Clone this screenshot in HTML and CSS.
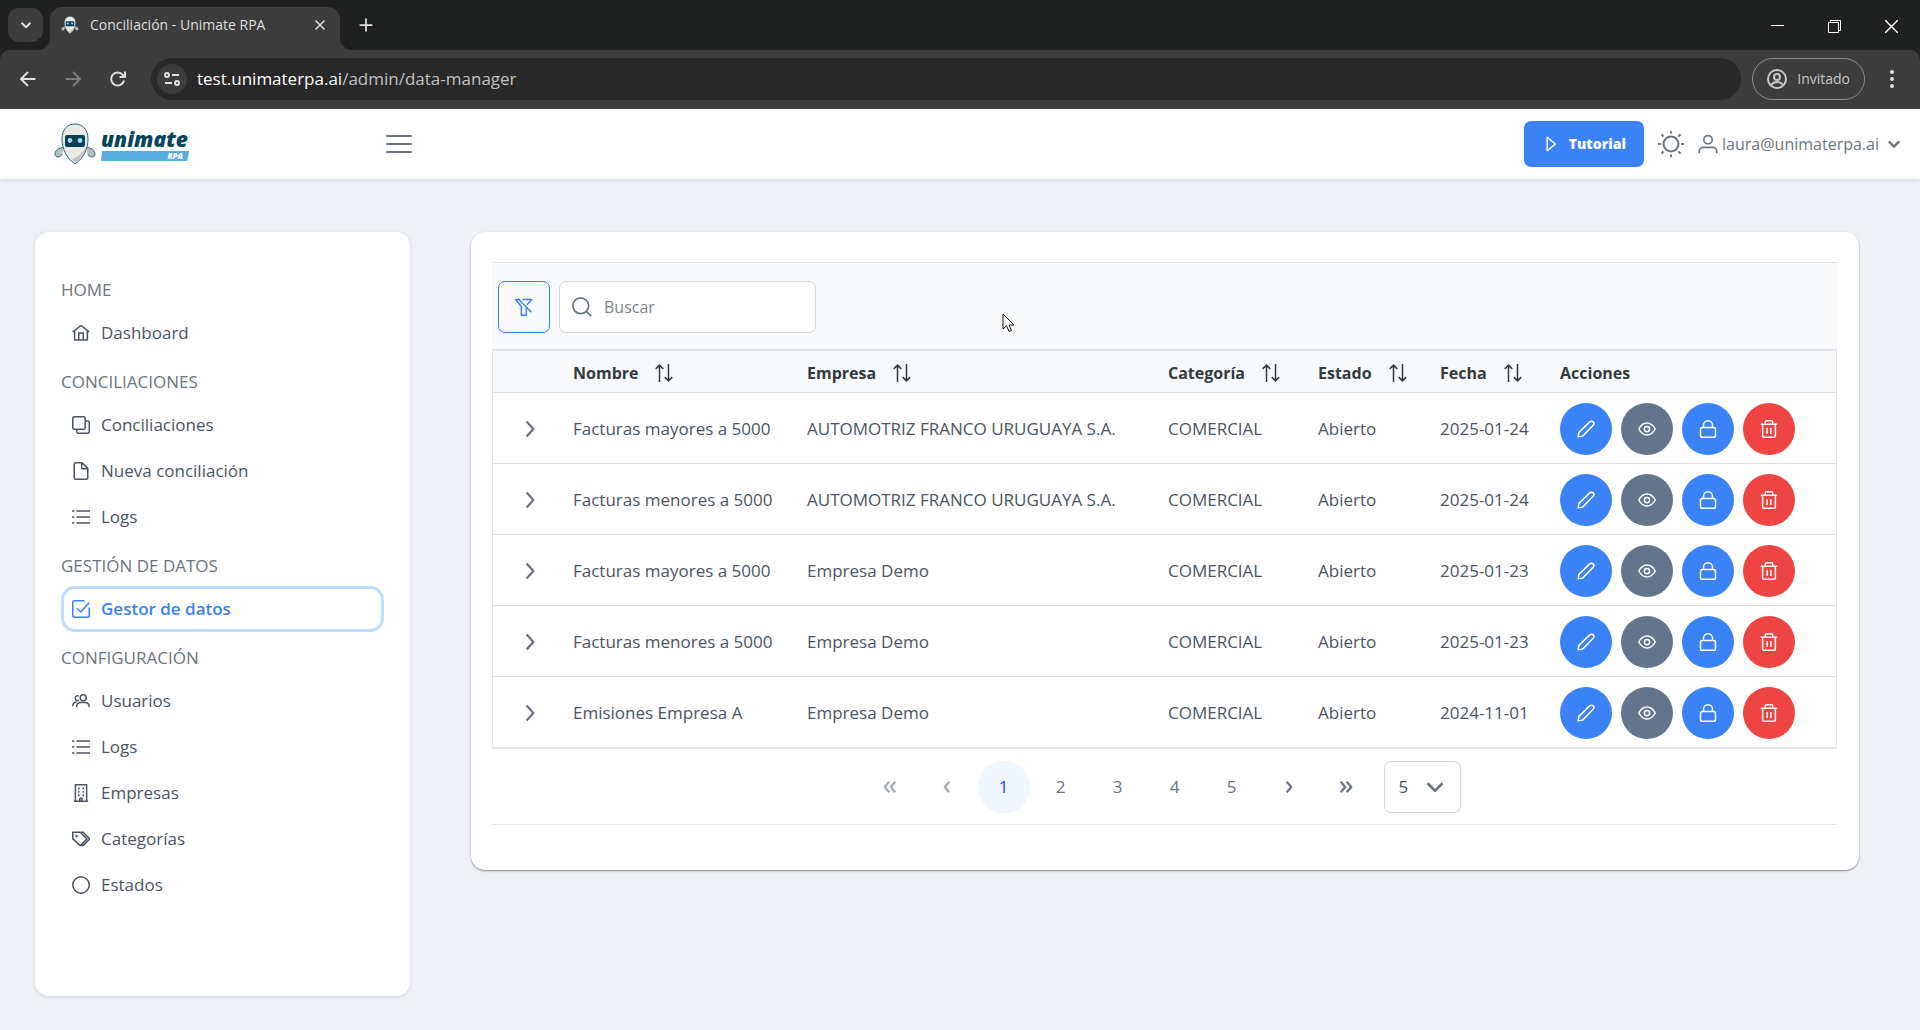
FILE: index.html
```html
<!DOCTYPE html>
<html lang="es">
<head>
<meta charset="utf-8">
<meta name="viewport" content="width=device-width, initial-scale=1">
<title>Conciliación - Unimate RPA</title>
<link rel="stylesheet" href="styles.css">
</head>
<body>
<svg class="sprite" aria-hidden="true">
  <symbol id="chev-down" viewBox="0 0 24 24"><path d="M3 7.500l9 9 9-9"/></symbol>
  <symbol id="chev-right" viewBox="0 0 24 24"><path d="M7.500 2l9 10-9 10"/></symbol>
  <symbol id="angle-left" viewBox="0 0 24 24"><path d="M15 5l-6 7 6 7"/></symbol>
  <symbol id="angle-right" viewBox="0 0 24 24"><path d="M9 5l6 7-6 7"/></symbol>
  <symbol id="angles-left" viewBox="0 0 24 24"><path d="M11 5l-6 7 6 7M19 5l-6 7 6 7"/></symbol>
  <symbol id="angles-right" viewBox="0 0 24 24"><path d="M5 5l6 7-6 7M13 5l6 7-6 7"/></symbol>
  <symbol id="home" viewBox="0 0 24 24"><path d="M1 10.500L12 2l11 8.500M3.500 9v12.300h17V9M9 21v-9h6v9"/></symbol>
  <symbol id="clone" viewBox="0 0 24 24"><rect x="1" y="1" width="16.500" height="16.500" rx="2"/><path d="M17.500 6.500H21a2 2 0 0 1 2 2V21a2 2 0 0 1-2 2H8.500a2 2 0 0 1-2-2v-3.500"/></symbol>
  <symbol id="file" viewBox="0 0 24 24"><path d="M13.500 1H5a2 2 0 0 0-2 2v18a2 2 0 0 0 2 2h14a2 2 0 0 0 2-2V8.500zM13 1.500V9h7.500"/></symbol>
  <symbol id="list" viewBox="0 0 24 24"><path d="M6 4h18M6 12h18M6 20h18M0 4h3M0 12h3M0 20h3"/></symbol>
  <symbol id="check-square" viewBox="0 0 24 24"><path d="M17 1H3a2 2 0 0 0-2 2v18a2 2 0 0 0 2 2h18a2 2 0 0 0 2-2V10M6.500 11l5 5L23 3.500"/></symbol>
  <symbol id="users" viewBox="0 0 24 24"><circle cx="15" cy="7.500" r="4"/><path d="M6 20c0-4 3-6 6-6h5c3.500 0 6 2 6 6M9 5.500a3.200 3.200 0 1 0 0 5.500M1 19c0-3.500 2-5.500 5-5.500"/></symbol>
  <symbol id="building" viewBox="0 0 24 24"><path d="M4.500 23V1h15v22M2.500 23h19M10.500 23v-4h3v4"/><path d="M8 6h2M14 6h2M8 10.500h2M14 10.500h2M8 15h2M14 15h2" stroke-width="2.500"/></symbol>
  <symbol id="tags" viewBox="0 0 24 24"><path d="M1 3h10l9 9-8.500 8.500h-1L1 11.500zM12 3h3l8.500 9-8.500 8.500h-4"/><circle cx="6" cy="8" r=".7"/></symbol>
  <symbol id="circle" viewBox="0 0 24 24"><circle cx="12" cy="12" r="11"/></symbol>
  <symbol id="pencil" viewBox="0 0 24 24"><path d="M1.500 22.500l1-6L17 2.500a3 3 0 0 1 4.500 4.500L7.500 21.500z"/></symbol>
  <symbol id="eye" viewBox="0 0 24 24"><path d="M1 12c6-10.500 16-10.500 22 0-6 10.500-16 10.500-22 0z"/><circle cx="12" cy="12" r="3.500"/></symbol>
  <symbol id="lock" viewBox="0 0 24 24"><rect x="2" y="10" width="20" height="13" rx="2.500"/><path d="M6 10V7a6 6 0 0 1 12 0v3"/></symbol>
  <symbol id="trash" viewBox="0 0 24 24"><path d="M1 5.500h22M3.500 5.500V21a2 2 0 0 0 2 2h13a2 2 0 0 0 2-2V5.500M7 5.500V3a2 2 0 0 1 2-2h6a2 2 0 0 1 2 2v2.500M9.500 10.500v8M14.500 10.500v8"/></symbol>
  <symbol id="sort" viewBox="0 0 24 24"><path d="M6 24V1.500M1 6.500l5-5 5 5M18 0v22.500M13 17.500l5 5 5-5"/></symbol>
  <symbol id="filter-slash" viewBox="0 0 24 24"><path d="M5 2l17 17M7 2H1l7.500 9.500V23h6.500V13M16 9l6.500-7H10"/></symbol>
  <symbol id="search" viewBox="0 0 24 24"><circle cx="10.500" cy="10.500" r="9.500"/><path d="M17.500 17.500L23 23"/></symbol>
  <symbol id="sun" viewBox="0 0 28 28"><circle cx="14" cy="14" r="7.500"/><path d="M14 1v2.500M14 24.500V27M1 14h3M24 14h3M4.500 4.500l2 2M21.500 21.500l2 2M4.500 23.500l2-2M21.500 6.500l2-2"/></symbol>
  <symbol id="user" viewBox="0 0 24 24"><circle cx="12" cy="7" r="5"/><path d="M1.500 23v-2a5 5 0 0 1 5-5h11a5 5 0 0 1 5 5v2"/></symbol>
  <symbol id="play" viewBox="0 0 24 24"><path d="M7 3v18l11-9z"/></symbol>
  <symbol id="robot" viewBox="0 0 42 42">
    <path d="M10 24C5 25 1 27 1 31c0 4 6 4 7 0M32 24c5 1 9 3 9 7 0 4-6 4-7 0" fill="#b9bfc0" stroke="#2f6477"/>
    <path d="M21 1C13 1 8 7 8 16c0 9 4 19 13 25 9-6 13-16 13-25C34 7 29 1 21 1z" fill="#e8eae6" stroke="#2f6477"/>
    <path d="M33 22c-2 8-6 14-12 18l-3-4c7-2 12-8 15-14z" fill="#c0c4c4" stroke="none"/>
    <rect x="11" y="12" width="20" height="12" rx="2" fill="#0b3f54" stroke="none"/>
    <circle cx="16" cy="17.500" r="2.400" fill="#a9d0ff" stroke="none"/><circle cx="26" cy="17.500" r="2.400" fill="#a9d0ff" stroke="none"/>
  </symbol>
</svg>

<div class="browser">
  <div class="tabstrip">
    <button class="tab-search" aria-label="Buscar pestañas"><svg class="icon s12 w4"><use href="#chev-down"/></svg></button>
    <div class="tab">
      <svg class="favicon"><use href="#robot"/></svg>
      <span class="tab-title">Conciliación - Unimate RPA</span>
      <button class="plain" aria-label="Cerrar pestaña"><svg class="icon s12 w3" viewBox="0 0 24 24"><path d="M3 3l18 18M21 3L3 21"/></svg></button>
    </div>
    <button class="plain new-tab" aria-label="Nueva pestaña"><svg class="icon s14 w3" viewBox="0 0 24 24"><path d="M12 1v22M1 12h22"/></svg></button>
    <div class="window-buttons">
      <button class="plain" aria-label="Minimizar"><svg class="icon s13" viewBox="0 0 13 13"><path d="M0 5.500h13"/></svg></button>
      <button class="plain" aria-label="Restaurar"><svg class="icon s13" viewBox="0 0 13 13"><path d="M.5 2.500h10v10H.5zM2.500 2.500v-2h10v10h-2"/></svg></button>
      <button class="plain" aria-label="Cerrar"><svg class="icon s13" viewBox="0 0 13 13"><path d="M0 0l13 13M13 0L0 13" stroke-width="1.400"/></svg></button>
    </div>
  </div>
  <div class="toolbar">
    <button class="plain" aria-label="Atrás"><svg class="icon s16 w2" viewBox="0 0 16 16"><path d="M15.500 8H1.500M8 1L1 8l7 7"/></svg></button>
    <button class="plain" aria-label="Adelante" disabled><svg class="icon s16 w2" viewBox="0 0 16 16"><path d="M.5 8h14M8 1l7 7-7 7"/></svg></button>
    <button class="plain" aria-label="Recargar"><svg class="icon s16 w2" viewBox="0 0 16 16"><path d="M14 9.500A6.500 6.500 0 1 1 12.800 4L15 6M15 .5V6H9.500"/></svg></button>
    <div class="omnibox">
      <button class="site-info" aria-label="Información del sitio"><svg class="icon s16 w2" viewBox="0 0 16 16"><circle cx="3" cy="4" r="2"/><path d="M8 4h7M1 12h7"/><circle cx="13" cy="12" r="2"/></svg></button>
      <span class="url">test.unimaterpa.ai<span class="url-path">/admin/data-manager</span></span>
    </div>
    <button class="guest"><svg class="icon s20 w2" viewBox="0 0 20 20"><circle cx="10" cy="10" r="9"/><circle cx="10" cy="8" r="3"/><path d="M4 16c3-4 9-4 12 0"/></svg>Invitado</button>
    <button class="plain menu-dots" aria-label="Menú"><svg class="icon s18" viewBox="0 0 18 18"><g fill="currentColor" stroke="none"><circle cx="9" cy="2" r="2"/><circle cx="9" cy="9" r="2"/><circle cx="9" cy="16" r="2"/></g></svg></button>
  </div>
</div>

<header class="topbar">
  <a class="logo" href="#">
    <svg class="logo-robot"><use href="#robot"/></svg>
    <span class="logo-words"><span class="logo-name">unimate</span><span class="logo-band">RPA</span></span>
  </a>
  <button class="plain burger" aria-label="Menú lateral"><svg viewBox="0 0 26 20"><path d="M1 2h24M1 10h24M1 18h24"/></svg></button>
  <div class="top-actions">
    <button class="tutorial"><svg class="icon s18 w2"><use href="#play"/></svg>Tutorial</button>
    <button class="plain" aria-label="Tema"><svg class="icon s28 w2"><use href="#sun"/></svg></button>
    <button class="plain account"><svg class="icon s20 w2"><use href="#user"/></svg><span>laura@unimaterpa.ai</span><svg class="icon s14 w4"><use href="#chev-down"/></svg></button>
  </div>
</header>

<div class="layout">
  <nav class="sidebar">
    <h2>HOME</h2>
    <a href="#"><svg class="icon s18 w2"><use href="#home"/></svg>Dashboard</a>
    <h2>CONCILIACIONES</h2>
    <a href="#"><svg class="icon s18 w2"><use href="#clone"/></svg>Conciliaciones</a>
    <a href="#"><svg class="icon s18 w2"><use href="#file"/></svg>Nueva conciliación</a>
    <a href="#"><svg class="icon s18 w2"><use href="#list"/></svg>Logs</a>
    <h2>GESTIÓN DE DATOS</h2>
    <a href="#" class="active"><svg class="icon s18 w2"><use href="#check-square"/></svg>Gestor de datos</a>
    <h2>CONFIGURACIÓN</h2>
    <a href="#"><svg class="icon s18 w2"><use href="#users"/></svg>Usuarios</a>
    <a href="#"><svg class="icon s18 w2"><use href="#list"/></svg>Logs</a>
    <a href="#"><svg class="icon s18 w2"><use href="#building"/></svg>Empresas</a>
    <a href="#"><svg class="icon s18 w2"><use href="#tags"/></svg>Categorías</a>
    <a href="#"><svg class="icon s18 w2"><use href="#circle"/></svg>Estados</a>
  </nav>

  <main class="card">
    <div class="table-tools">
      <button class="filter" aria-label="Limpiar filtros"><svg class="icon s18 w2"><use href="#filter-slash"/></svg></button>
      <label class="search"><svg class="icon s20 w2"><use href="#search"/></svg><input type="text" placeholder="Buscar" aria-label="Buscar"></label>
    </div>
    <table>
      <colgroup><col class="c-toggle"><col class="c-name"><col class="c-company"><col class="c-category"><col class="c-state"><col class="c-date"><col class="c-actions"></colgroup>
      <thead>
        <tr><th></th>
          <th><span class="sortable">Nombre<svg class="icon s18 w2"><use href="#sort"/></svg></span></th>
          <th><span class="sortable">Empresa<svg class="icon s18 w2"><use href="#sort"/></svg></span></th>
          <th><span class="sortable">Categoría<svg class="icon s18 w2"><use href="#sort"/></svg></span></th>
          <th><span class="sortable">Estado<svg class="icon s18 w2"><use href="#sort"/></svg></span></th>
          <th><span class="sortable">Fecha<svg class="icon s18 w2"><use href="#sort"/></svg></span></th>
          <th>Acciones</th></tr>
      </thead>
      <tbody id="rows"></tbody>
    </table>
    <div class="paginator">
      <button disabled aria-label="Primera"><svg class="icon s18 w3"><use href="#angles-left"/></svg></button>
      <button disabled aria-label="Anterior"><svg class="icon s18 w3"><use href="#angle-left"/></svg></button>
      <button class="current">1</button>
      <button>2</button>
      <button>3</button>
      <button>4</button>
      <button>5</button>
      <button aria-label="Siguiente"><svg class="icon s18 w3"><use href="#angle-right"/></svg></button>
      <button aria-label="Última"><svg class="icon s18 w3"><use href="#angles-right"/></svg></button>
      <span class="page-size"><select aria-label="Filas por página"><option>5</option><option>10</option><option>20</option></select><svg class="icon s20 w3"><use href="#chev-down"/></svg></span>
    </div>
  </main>
</div>
<svg class="pointer" viewBox="0 0 13 20" aria-hidden="true"><path d="M1 1v15l3.500-3.300L7 18.500l2.500-1L7 12h5z"/></svg>
<script src="rows.js"></script>
</body>
</html>
```
FILE: styles.css
```css
* { box-sizing: border-box; }
body { margin: 0; min-height: 100vh; background: #eef2f6; color: #4b5563; font: 17px/24px "Open Sans", "Noto Sans", sans-serif; }
button, input, select { font: inherit; color: inherit; }
button { cursor: pointer; }
button:disabled { cursor: default; }
a { text-decoration: none; color: inherit; }
.sprite { display: none; }
.icon { display: block; flex: none; fill: none; stroke: currentColor; stroke-width: 1; stroke-linejoin: round; }
.w2 { stroke-width: 2; }
.w3 { stroke-width: 3; }
.w4 { stroke-width: 4; }
.s12 { width: 12px; height: 12px; }
.s13 { width: 13px; height: 13px; }
.s14 { width: 14px; height: 14px; }
.s16 { width: 16px; height: 16px; }
.s18 { width: 18px; height: 18px; }
.s20 { width: 20px; height: 20px; }
.s28 { width: 28px; height: 28px; }
.plain { display: flex; align-items: center; border: 0; padding: 0; background: none; }

.browser { background: #1f2121; color: #dedede; }
.tabstrip { display: flex; align-items: flex-end; height: 50px; padding-left: 8px; }
.tab-search { display: flex; align-items: center; justify-content: center; width: 35px; height: 34px; margin: 0 7px 8px 0; border: 0; border-radius: 11px; background: #3c3c3c; }
.tab { position: relative; display: flex; align-items: center; width: 290px; height: 43px; padding: 0 14px 7px 11px; border-radius: 12px 12px 0 0; background: #3c3c3c; font-size: 14px; }
.tab::before, .tab::after { content: ""; position: absolute; bottom: 0; width: 12px; height: 12px; }
.tab::before { right: 100%; background: radial-gradient(circle at 0 0, #1f2121 12px, #3c3c3c 12px); }
.tab::after { left: 100%; background: radial-gradient(circle at 100% 0, #1f2121 12px, #3c3c3c 12px); }
.favicon { width: 18px; height: 18px; margin-right: 11px; }
.tab-title { flex: 1; white-space: nowrap; }
.new-tab { height: 50px; margin-left: 19px; }
.window-buttons { display: flex; align-items: center; gap: 44px; height: 48px; margin-left: auto; padding-right: 22px; color: #fff; }
.toolbar { display: flex; align-items: center; gap: 29px; height: 59px; padding: 0 20px; border-bottom: 1px solid #474747; border-radius: 10px 10px 0 0; background: #3c3c3c; }
.toolbar .plain:disabled { color: #7d7d7d; }
.omnibox { display: flex; flex: 1; align-items: center; gap: 10px; height: 42px; margin: 0 -18px 0 -4px; padding: 0 6px; border-radius: 21px; background: #282828; }
.site-info { display: flex; align-items: center; justify-content: center; width: 30px; height: 30px; border: 0; border-radius: 50%; padding: 0; background: #3c3c3c; }
.url { color: #fff; }
.url-path { color: #c0c0c0; }
.guest { display: flex; align-items: center; gap: 10px; height: 42px; padding: 0 14px; border: 1px solid #8a8a8a; border-radius: 21px; background: none; color: #c7c7c7; font-size: 14px; }
.menu-dots { margin-right: -1px; margin-left: -11px; }

.topbar { display: flex; align-items: center; height: 70px; padding: 0 18px 0 52px; background: #fff; color: #6c757d; box-shadow: 0 1px 4px rgba(0, 0, 0, .15); }
.logo { display: flex; align-items: center; gap: 3px; width: 334px; }
.logo-robot { width: 46px; height: 42px; }
.logo-words { display: flex; flex-direction: column; width: 88px; }
.logo-name { color: #06465a; font: italic 800 21px/24px "Open Sans", sans-serif; }
.logo-band { padding-right: 6px; background: #5aaedf; color: #fff; clip-path: polygon(1px 0, 100% 0, 98% 100%, 0 100%); font: italic 800 8px/10px "Open Sans", sans-serif; text-align: right; }
.burger svg { width: 26px; height: 20px; fill: none; stroke: #6b7280; stroke-width: 2; stroke-linecap: round; }
.top-actions { display: flex; align-items: center; gap: 13px; margin-left: auto; }
.tutorial { display: flex; align-items: center; gap: 9px; height: 46px; padding: 0 18px; border: 0; border-radius: 7px; background: #3b82f6; color: #fff; font-size: 14px; font-weight: 800; }
.account { gap: 4px; font-size: 16px; }
.account .s14 { margin: 0 1px 0 4px; }

.layout { display: flex; align-items: flex-start; gap: 61px; padding: 53px 61px 34px 35px; }
.sidebar { flex: none; width: 375px; padding: 32px 26px 88px; border-radius: 14px; background: #fff; box-shadow: 0 1px 4px rgba(0, 0, 0, .12); }
.sidebar h2 { margin: 14px 0 8px; color: #6c757d; font-size: 17px; font-weight: 500; line-height: 24px; }
.sidebar a { display: flex; align-items: center; gap: 11px; height: 46px; padding-left: 11px; border-radius: 14px; }
.sidebar .active { box-shadow: inset 0 0 0 3px #bfdbfe; color: #3b82f6; font-weight: 600; }
.card { flex: 1; min-width: 0; padding: 30px 22px 45px 21px; border-radius: 14px; background: #fff; box-shadow: 0 1px 2px rgba(0, 0, 0, .45); }
.table-tools { display: flex; gap: 9px; padding: 18px 6px 16px; border-top: 1px solid #dee2e6; border-bottom: 1px solid #dee2e6; background: #f8f9fb; }
.filter { display: flex; align-items: center; justify-content: center; width: 52px; height: 52px; border: 1px solid #3b82f6; border-radius: 7px; background: none; color: #3b82f6; }
.search { display: flex; align-items: center; gap: 12px; width: 257px; height: 52px; padding-left: 12px; border: 1px solid #d1d5db; border-radius: 7px; background: #fff; color: #6b7280; }
.search input { width: 100%; min-width: 0; border: 0; padding: 0; background: none; outline: 0; font-size: 16px; }
.search input::placeholder { color: #7b828a; opacity: 1; }
table { width: 100%; table-layout: fixed; border-collapse: separate; border-spacing: 0; border: 1px solid #e5e7eb; }
th, td { padding: 2px 0 0 18px; border-bottom: 1px solid #dee2e6; text-align: left; white-space: nowrap; }
th { height: 42px; background: #f8f9fb; color: #343a40; font-weight: 700; font-size: 16px; }
td { height: 71px; }
.c-toggle { width: 62px; }
.c-name { width: 234px; }
.c-company { width: 361px; }
.c-category { width: 150px; }
.c-state { width: 122px; }
.c-date { width: 120px; }
.sortable { display: flex; align-items: center; gap: 17px; }
.toggle { padding-left: 28px; color: #6b7280; }
.toggle .icon { stroke-width: 3; }
.actions { display: flex; gap: 9px; }
.actions button { display: flex; align-items: center; justify-content: center; width: 52px; height: 52px; padding: 0; border: 0; border-radius: 50%; background: #3b82f6; color: #fff; }
.actions .view { background: #64748b; }
.actions .delete { background: #ef4444; }
.paginator { display: flex; align-items: center; justify-content: center; gap: 5px; height: 76px; padding-right: 5px; border-bottom: 1px solid #e5e7eb; color: #6b7280; }
.paginator button { display: flex; align-items: center; justify-content: center; width: 52px; height: 52px; padding: 0; border: 0; border-radius: 50%; background: none; }
.paginator button:disabled { opacity: .6; }
.paginator .current { background: #eff6ff; color: #1d4ed8; }
.page-size { display: grid; align-items: center; width: 77px; margin-left: 7px; color: #4b5563; }
.page-size > * { grid-area: 1 / 1; }
.page-size select { width: 100%; height: 52px; padding: 0 14px; border: 1px solid #d1d5db; border-radius: 7px; appearance: none; background: #fff; }
.page-size .icon { justify-self: end; margin-right: 16px; color: #6b7280; pointer-events: none; }
.pointer { position: absolute; left: 1002px; top: 313px; width: 13px; height: 20px; fill: #fff; stroke: #111; pointer-events: none; }
```
FILE: rows.js
```js
const records = [
  ["Facturas mayores a 5000", "AUTOMOTRIZ FRANCO URUGUAYA S.A.", "2025-01-24"],
  ["Facturas menores a 5000", "AUTOMOTRIZ FRANCO URUGUAYA S.A.", "2025-01-24"],
  ["Facturas mayores a 5000", "Empresa Demo", "2025-01-23"],
  ["Facturas menores a 5000", "Empresa Demo", "2025-01-23"],
  ["Emisiones Empresa A", "Empresa Demo", "2024-11-01"]
];
const icon = (name) => `<svg class="icon s18 w2"><use href="#${name}"/></svg>`;
document.getElementById("rows").innerHTML = records.map(([name, company, date]) => `
  <tr>
    <td class="toggle"><button class="plain" aria-label="Expandir">${icon("chev-right")}</button></td>
    <td>${name}</td><td>${company}</td><td>COMERCIAL</td><td>Abierto</td><td>${date}</td>
    <td><div class="actions">
      <button aria-label="Editar">${icon("pencil")}</button>
      <button class="view" aria-label="Ver">${icon("eye")}</button>
      <button aria-label="Bloquear">${icon("lock")}</button>
      <button class="delete" aria-label="Eliminar">${icon("trash")}</button>
    </div></td>
  </tr>`).join("");
```
